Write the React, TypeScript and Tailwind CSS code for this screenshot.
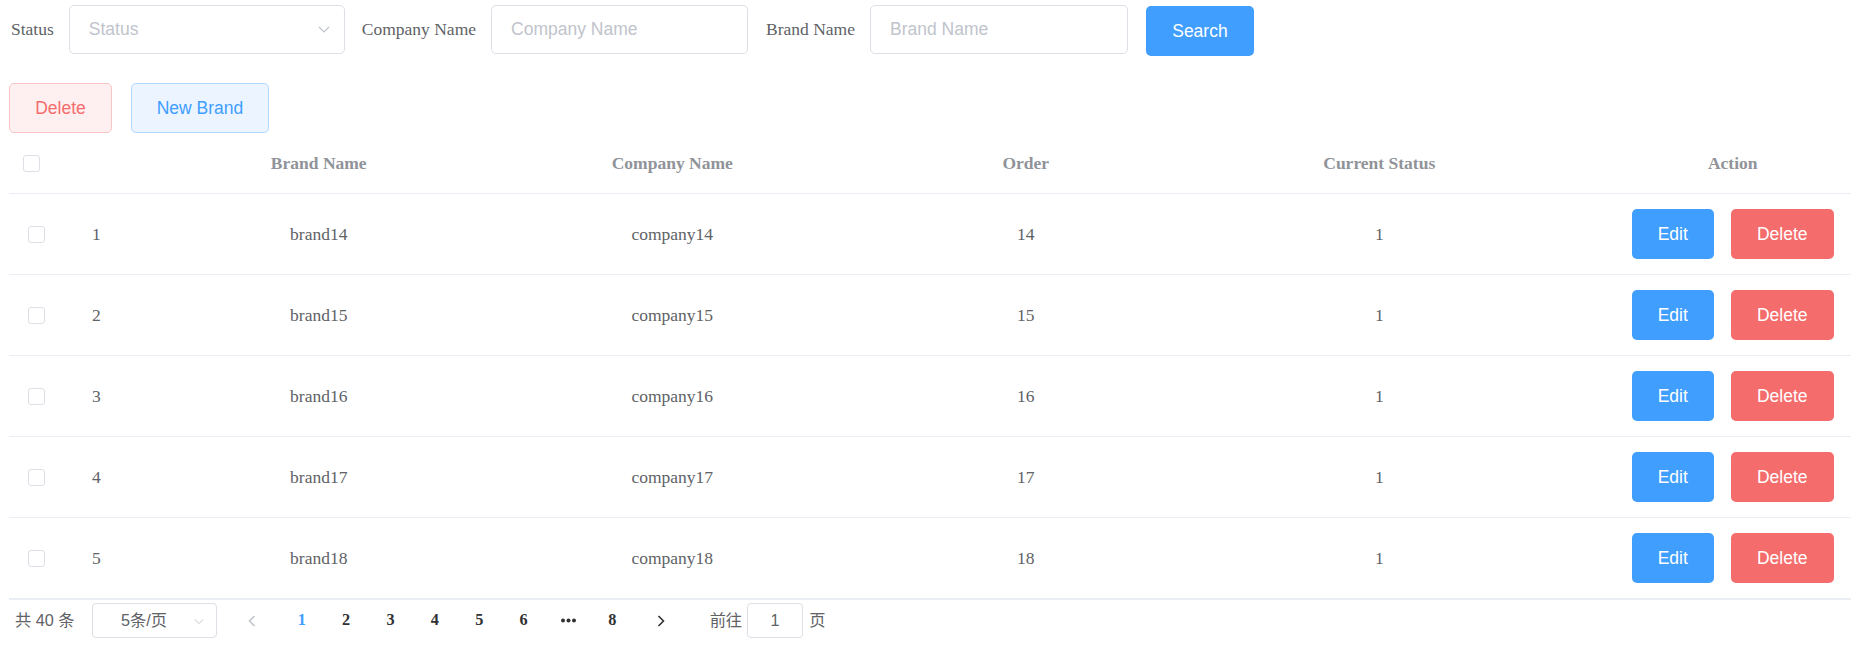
import React from 'react';

const rows = [14, 15, 16, 17, 18].map((n, i) => ({
  idx: i + 1,
  brand: `brand${n}`,
  company: `company${n}`,
  order: n,
  status: 1,
}));

const pages = ['1', '2', '3', '4', '5', '6', 'more', '8'];

function ChevronDown({ className }: { className?: string }) {
  return (
    <svg width="12" height="7" viewBox="0 0 12 7" fill="none" className={className}>
      <polyline points="1,1 6,6 11,1" stroke="#c0c4cc" strokeWidth="1.2" />
    </svg>
  );
}

function Checkbox() {
  return <span className="block w-[17px] h-[17px] rounded-[3px] border border-[#dcdfe6] bg-white" />;
}

export default function App() {
  const sans = "font-['Liberation_Sans','Noto_Sans_CJK_SC',sans-serif]";
  const cell = 'flex items-center justify-center';

  return (
    <div className="w-[1851px] h-[647px] overflow-hidden bg-white pl-[9px] pt-[5px] font-['Liberation_Serif',serif] text-[17.5px] text-[#606266]">
      {/* Filter form */}
      <div className="flex items-start h-[50px]">
        <span className="ml-[2px] mr-[15px] h-[49px] flex items-center">Status</span>
        <div className="w-[276px] h-[49px] rounded-[5px] border border-[#dcdfe6] flex items-center justify-between pl-[19px] pr-[14px]">
          <span className={`${sans} text-[#c0c4cc]`}>Status</span>
          <ChevronDown />
        </div>
        <span className="ml-[17px] mr-[15px] h-[49px] flex items-center">Company Name</span>
        <div className={`w-[257px] h-[49px] rounded-[5px] border border-[#dcdfe6] flex items-center pl-[19px] ${sans} text-[#c0c4cc]`}>
          Company Name
        </div>
        <span className="ml-[18px] mr-[15px] h-[49px] flex items-center">Brand Name</span>
        <div className={`w-[258px] h-[49px] rounded-[5px] border border-[#dcdfe6] flex items-center pl-[19px] ${sans} text-[#c0c4cc]`}>
          Brand Name
        </div>
        <button className={`ml-[18px] mt-px w-[108px] h-[50px] rounded-[5px] bg-[#409eff] text-white ${sans}`}>
          Search
        </button>
      </div>

      {/* Toolbar */}
      <div className={`flex mt-[28px] ${sans}`}>
        <button className="w-[103px] h-[50px] rounded-[5px] border border-[#fbc4c4] bg-[#fef0f0] text-[#f56c6c]">
          Delete
        </button>
        <button className="ml-[19px] w-[138px] h-[50px] rounded-[5px] border border-[#b3d8ff] bg-[#ecf5ff] text-[#409eff]">
          New Brand
        </button>
      </div>

      {/* Table */}
      <div className="mt-px w-[1910px]">
        <div className="grid grid-cols-[69px_64px_repeat(5,353.5px)] h-[60px] border-b border-[#ebeef5] font-bold text-[#909399]">
          <div className="flex items-center pl-[14px]">
            <Checkbox />
          </div>
          <div />
          <div className={cell}>Brand Name</div>
          <div className={cell}>Company Name</div>
          <div className={cell}>Order</div>
          <div className={cell}>Current Status</div>
          <div className={cell}>Action</div>
        </div>
        {rows.map((r, i) => (
          <div
            key={r.idx}
            className={`grid grid-cols-[69px_64px_repeat(5,353.5px)] border-[#ebeef5] ${
              i === rows.length - 1 ? 'h-[82px] border-b-2' : 'h-[81px] border-b'
            }`}
          >
            <div className="flex items-center pl-[19px]">
              <Checkbox />
            </div>
            <div className="flex items-center pl-[14px]">{r.idx}</div>
            <div className={cell}>{r.brand}</div>
            <div className={cell}>{r.company}</div>
            <div className={cell}>{r.order}</div>
            <div className={cell}>{r.status}</div>
            <div className={`${cell} gap-[17px] ${sans}`}>
              <button className="w-[82px] h-[50px] rounded-[5px] bg-[#409eff] text-white">Edit</button>
              <button className="w-[103px] h-[50px] rounded-[5px] bg-[#f56c6c] text-white">Delete</button>
            </div>
          </div>
        ))}
      </div>

      {/* Pagination */}
      <div className="flex items-center h-[35px] mt-[3px] text-[16.25px]">
        <span className={`w-[83px] pl-[6px] ${sans}`}>共 40 条</span>
        <div className={`relative w-[125px] h-[35px] rounded-[4px] border border-[#dcdfe6] flex items-center justify-center pl-[10px] pr-[31px] ${sans}`}>
          5条/页
          <ChevronDown className="absolute right-[12px] top-[14px] w-[10px]" />
        </div>
        <div className="w-[62.5px] h-[35px] flex items-center pl-[31px]">
          <svg width="8" height="12" viewBox="0 0 8 12" fill="none">
            <polyline points="6.5,1 1.5,6 6.5,11" stroke="#c0c4cc" strokeWidth="1.6" />
          </svg>
        </div>
        {pages.map((p) => (
          <div
            key={p}
            className={`w-[44.4px] h-[35px] flex items-center justify-center font-bold ${
              p === '1' ? 'text-[#409eff]' : 'text-[#303133]'
            }`}
          >
            {p === 'more' ? (
              <svg width="15" height="5" viewBox="0 0 15 5">
                <circle cx="2" cy="2.5" r="2" fill="#303133" />
                <circle cx="7.5" cy="2.5" r="2" fill="#303133" />
                <circle cx="13" cy="2.5" r="2" fill="#303133" />
              </svg>
            ) : (
              p
            )}
          </div>
        ))}
        <div className="w-[50px] h-[35px] flex items-center pl-[22px]">
          <svg width="8" height="12" viewBox="0 0 8 12" fill="none">
            <polyline points="1.5,1 6.5,6 1.5,11" stroke="#303133" strokeWidth="1.6" />
          </svg>
        </div>
        <span className={`ml-[25px] ${sans}`}>前往</span>
        <div className={`ml-[5px] w-[56px] h-[35px] rounded-[4px] border border-[#dcdfe6] flex items-center justify-center ${sans}`}>
          1
        </div>
        <span className={`ml-[6px] ${sans}`}>页</span>
      </div>
    </div>
  );
}
